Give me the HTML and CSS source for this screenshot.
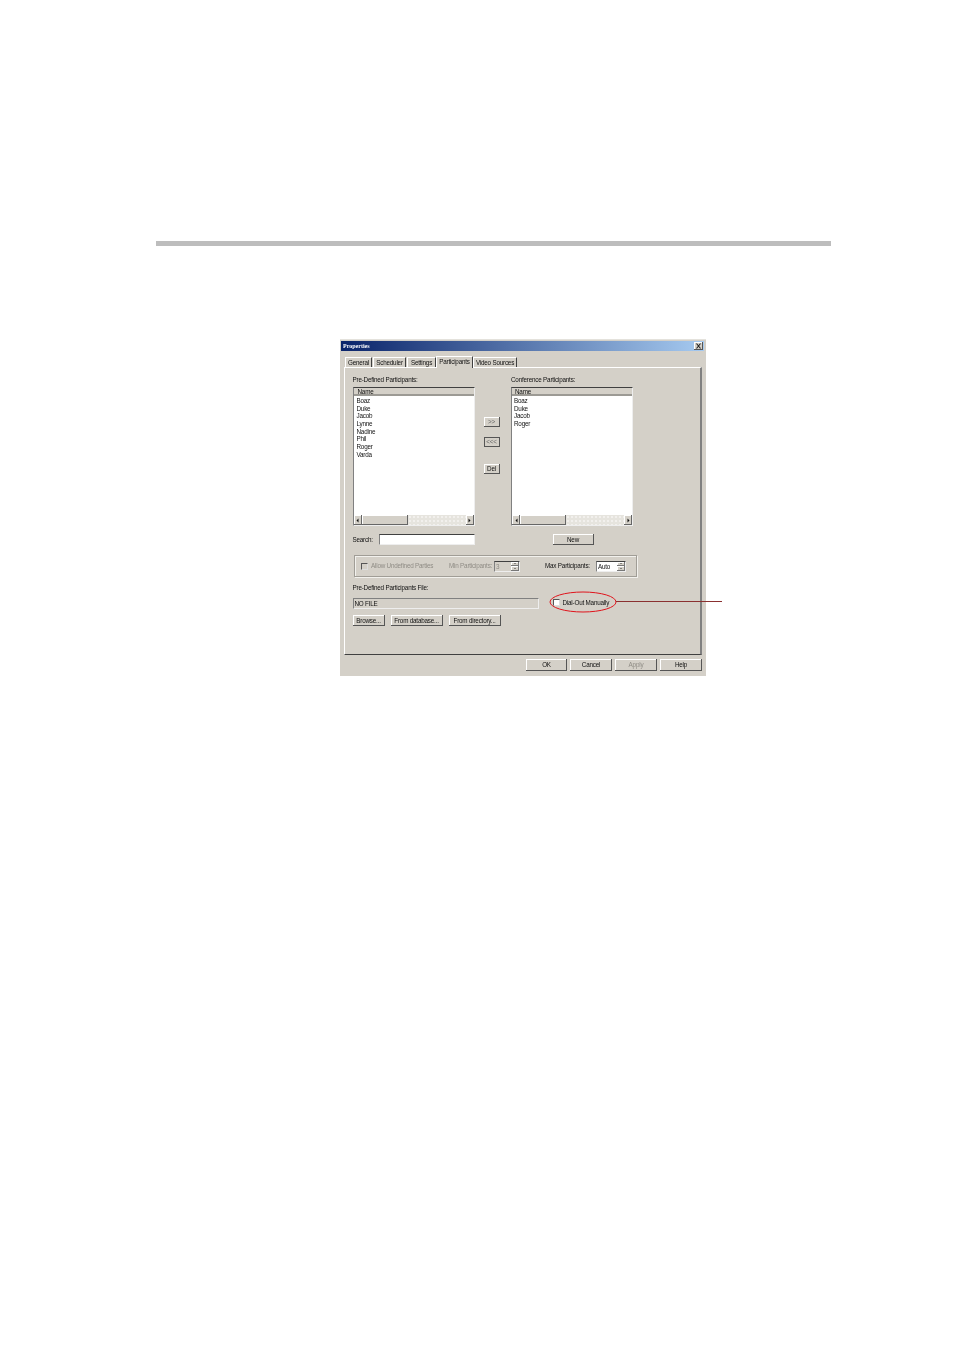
FILE: index.html
```html
<!DOCTYPE html>
<html lang="en">
<head>
    <meta charset="UTF-8">
    <title>Properties</title>
    <link rel="stylesheet" href="styles.css">
</head>
<body>
    <div class="page">
        <div class="rule"></div>

        <div class="dialog">
            <div class="title-bar">
                <span>Properties</span>
                <span class="close-btn">
                    <svg width="9" height="8" viewBox="0 0 9 8"><path d="M2.5 1.5l4 5M6.5 1.5l-4 5" stroke="#222" stroke-width="1.1" fill="none"/></svg>
                </span>
            </div>

            <div class="tabs">
                <div class="tab tab-general">General</div>
                <div class="tab tab-scheduler">Scheduler</div>
                <div class="tab tab-settings">Settings</div>
                <div class="tab tab-participants active">Participants</div>
                <div class="tab tab-video">Video Sources</div>
            </div>

            <div class="panel">
                <div class="lists">
                    <div class="list-col">
                        <div class="field-label">Pre-Defined Participants:</div>
                        <div class="listbox">
                            <div class="list-head">Name</div>
                            <div class="list-rows">
                                <div>Boaz</div>
                                <div>Duke</div>
                                <div>Jacob</div>
                                <div>Lynne</div>
                                <div>Nadine</div>
                                <div>Phil</div>
                                <div>Roger</div>
                                <div>Varda</div>
                            </div>
                            <div class="scrollbar">
                                <span class="arrow"><svg width="3" height="5" viewBox="0 0 3 5"><path d="M2.5 .5v4L.5 2.5z" fill="#111"/></svg></span>
                                <span class="thumb"></span>
                                <span class="track"></span>
                                <span class="arrow"><svg width="3" height="5" viewBox="0 0 3 5"><path d="M.5 .5v4l2-2z" fill="#111"/></svg></span>
                            </div>
                        </div>
                    </div>

                    <div class="move-btns">
                        <div class="btn small muted">&gt;&gt;</div>
                        <div class="btn small muted focused">&lt;&lt;&lt;</div>
                        <div class="btn small del">Del</div>
                    </div>

                    <div class="list-col">
                        <div class="field-label">Conference Participants:</div>
                        <div class="listbox">
                            <div class="list-head">Name</div>
                            <div class="list-rows">
                                <div>Boaz</div>
                                <div>Duke</div>
                                <div>Jacob</div>
                                <div>Roger</div>
                            </div>
                            <div class="scrollbar">
                                <span class="arrow"><svg width="3" height="5" viewBox="0 0 3 5"><path d="M2.5 .5v4L.5 2.5z" fill="#111"/></svg></span>
                                <span class="thumb"></span>
                                <span class="track"></span>
                                <span class="arrow"><svg width="3" height="5" viewBox="0 0 3 5"><path d="M.5 .5v4l2-2z" fill="#111"/></svg></span>
                            </div>
                        </div>
                    </div>
                </div>

                <div class="search-row">
                    <span class="search-label">Search:</span>
                    <span class="input search-input"></span>
                    <div class="btn new-btn">New</div>
                </div>

                <div class="group">
                    <span class="checkbox disabled"></span>
                    <span class="disabled-text allow-label">Allow Undefined Parties</span>
                    <span class="disabled-text min-label">Min Participants:</span>
                    <span class="spin disabled-spin">
                        <span class="spin-value">3</span>
                        <span class="spin-btns"><i></i><i></i></span>
                    </span>
                    <span class="max-label">Max Participants:</span>
                    <span class="spin">
                        <span class="spin-value">Auto</span>
                        <span class="spin-btns"><i></i><i></i></span>
                    </span>
                </div>

                <div class="field-label file-label">Pre-Defined Participants File:</div>
                <div class="file-row">
                    <div class="file-field">NO FILE</div>
                    <span class="checkbox"></span>
                    <span class="dial-label">Dial-Out Manually</span>
                </div>

                <div class="file-btns">
                    <div class="btn browse-btn">Browse...</div>
                    <div class="btn db-btn">From database...</div>
                    <div class="btn dir-btn">From directory...</div>
                </div>
            </div>

            <div class="footer">
                <div class="btn foot-btn">OK</div>
                <div class="btn foot-btn">Cancel</div>
                <div class="btn foot-btn apply">Apply</div>
                <div class="btn foot-btn">Help</div>
            </div>
        </div>

        <svg class="callout" width="180" height="24" viewBox="0 0 180 24">
            <ellipse cx="35" cy="12" rx="33" ry="10" fill="none" stroke="#e0141c" stroke-width="1"/>
            <path d="M68 11.5H174" stroke="#8a3030" stroke-width="1" fill="none"/>
        </svg>
    </div>
</body>
</html>
```

FILE: styles.css
```css
:root {
    --face: #d4d0c8;
    --dark: #808080;
    --darker: #404040;
    --text: #111;
    --disabled: #8f8c85;
}

* {
    box-sizing: border-box;
    margin: 0;
    padding: 0;
}

html, body {
    height: 100%;
    background: #fff;
    overflow: hidden;
}

body {
    font-family: "Liberation Sans", Arial, sans-serif;
    font-size: 6.3px;
    line-height: 8px;
    letter-spacing: -0.2px;
    color: var(--text);
}

.page {
    position: relative;
    width: 954px;
    height: 1351px;
    padding-top: 241px;
}

.rule {
    width: 675px;
    height: 5px;
    margin-left: 156px;
    background: #bdbdbd;
}

.dialog {
    width: 366px;
    height: 337px;
    margin: 93px 0 0 340px;
    padding: 1px 2px 0 1px;
    background: var(--face);
    border-top: 1px solid #e4e2dc;
    filter: blur(0.3px);
}

.title-bar {
    height: 10px;
    padding: 0 1px 0 2px;
    display: flex;
    justify-content: space-between;
    align-items: center;
    background: linear-gradient(90deg, #0a246a, #a6caf0);
    color: #fff;
    font-weight: 700;
    font-family: "Liberation Serif", serif;
    letter-spacing: 0;
    font-size: 6px;
}

.close-btn {
    width: 9px;
    height: 8px;
    display: flex;
    background: var(--face);
    box-shadow: inset -1px -1px 0 #555, inset 1px 1px 0 #fff;
}

.tabs {
    height: 16px;
    position: relative;
    display: flex;
    align-items: flex-end;
    padding-left: 4px;
}

.tab {
    height: 10px;
    line-height: 9px;
    text-align: center;
    border-top: 1px solid #fff;
    border-left: 1px solid #fff;
    border-right: 1px solid var(--darker);
}

.tab-general { width: 27px; margin-right: 1px; }
.tab-scheduler { width: 33px; margin-right: 1px; }
.tab-settings { width: 29px; }

.tab.active {
    width: 37px;
    height: 12px;
    margin-bottom: -1px;
    background: var(--face);
    position: relative;
    z-index: 1;
}

.tab-video { width: 44px; }

.panel {
    width: 358px;
    height: 288px;
    margin-left: 3px;
    padding: 8px 0 0 7.5px;
    border-top: 1px solid #fff;
    border-left: 1px solid #fff;
    border-right: 2px solid var(--dark);
    border-bottom: 1px solid var(--darker);
}

.lists {
    display: grid;
    grid-template-columns: 122px 36.5px 122px;
}

.field-label {
    height: 8px;
    margin-bottom: 3px;
}

.listbox {
    height: 139px;
    display: flex;
    flex-direction: column;
    background: #fff;
    border-top: 1px solid var(--darker);
    border-left: 1px solid var(--dark);
    border-right: 1px solid #eee;
    border-bottom: 1px solid #eee;
}

.list-head {
    height: 8px;
    padding-left: 4px;
    line-height: 8px;
    background: var(--face);
    border-bottom: 2px solid #9c9a94;
}

.list-rows {
    flex: 1;
    padding: 1px 0 0 3px;
    line-height: 7.65px;
}

.list-col:last-child .list-head { padding-left: 3px; }
.list-col:last-child .list-rows { padding-left: 2px; }

.scrollbar {
    height: 10px;
    display: flex;
}

.arrow {
    width: 8px;
    display: flex;
    align-items: center;
    justify-content: center;
    background: var(--face);
    box-shadow: inset -1px -1px 0 #666, inset 1px 1px 0 #fff;
}

.thumb {
    width: 46px;
    background: var(--face);
    box-shadow: inset -1px -1px 0 #666, inset 1px 1px 0 #fff;
}

.track {
    flex: 1;
    background-color: #e6e4de;
    background-image: radial-gradient(circle, #fff 0.6px, transparent 0.8px);
    background-size: 4px 4px;
}

.move-btns {
    display: flex;
    flex-direction: column;
    padding: 41px 0 0 9px;
}

.btn {
    height: 11px;
    line-height: 11px;
    text-align: center;
    background: var(--face);
    box-shadow: inset -1px -1px 0 #555, inset 1px 1px 0 #fff;
}

.btn.small {
    width: 16px;
    height: 10px;
    line-height: 9px;
}

.btn.muted { color: #666; }
.btn.focused { margin-top: 10px; outline: 1px solid #555; outline-offset: -1px; }
.btn.del { margin-top: 17px; }

.search-row {
    height: 11px;
    margin-top: 8px;
    display: flex;
    align-items: center;
}

.search-label { width: 26px; }

.input {
    background: #fff;
    border-top: 1px solid var(--darker);
    border-left: 1px solid var(--dark);
    border-right: 1px solid #eee;
    border-bottom: 1px solid #eee;
}

.search-input {
    width: 96px;
    height: 11px;
}

.new-btn {
    width: 41px;
    margin-left: 78px;
}

.group {
    width: 283px;
    height: 22px;
    margin: 10px 0 0 1.5px;
    padding-left: 6px;
    display: flex;
    align-items: center;
    border: 1px solid #a09d96;
    border-bottom-color: #a09d96;
    box-shadow: inset 1px 1px 0 #f2f1ed, 1px 1px 0 #f2f1ed;
}

.checkbox {
    width: 7px;
    height: 7px;
    flex: none;
    background: #fff;
    border-top: 1px solid #555;
    border-left: 1px solid #555;
    border-right: 1px solid #ddd;
    border-bottom: 1px solid #ddd;
}

.checkbox.disabled { background: var(--face); }

.disabled-text { color: var(--disabled); }
.allow-label { width: 78px; margin-left: 3px; }
.min-label { width: 45px; }
.max-label { margin: 0 6px 0 25px; }

.spin {
    width: 30px;
    height: 11px;
    display: flex;
    justify-content: space-between;
    background: #fff;
    border-top: 1px solid var(--darker);
    border-left: 1px solid var(--dark);
    border-right: 1px solid #eee;
    border-bottom: 1px solid #eee;
}

.disabled-spin {
    width: 26px;
    background: var(--face);
    color: var(--disabled);
}

.spin-value {
    padding-left: 1px;
    line-height: 9px;
}

.spin-btns {
    width: 8px;
    display: flex;
    flex-direction: column;
}

.spin-btns i {
    flex: 1;
    display: flex;
    align-items: center;
    justify-content: center;
    background: var(--face);
    box-shadow: inset -1px -1px 0 #777, inset 1px 1px 0 #fff;
}

.spin-btns i::after {
    content: "";
    border-left: 1.5px solid transparent;
    border-right: 1.5px solid transparent;
    border-bottom: 1.5px solid #333;
}

.spin-btns i + i::after {
    border-bottom: 0;
    border-top: 1.5px solid #333;
}

.file-label {
    margin-top: 7px;
    margin-bottom: 6px;
}

.file-row {
    height: 11px;
    display: flex;
    align-items: center;
}

.file-row .checkbox {
    margin: 0 0 2px 14px;
}

.file-field {
    width: 186px;
    height: 11px;
    padding-left: 1px;
    line-height: 9px;
    border-top: 1px solid var(--dark);
    border-left: 1px solid var(--dark);
    border-right: 1px solid #eee;
    border-bottom: 1px solid #eee;
}

.dial-label { margin: 0 0 2px 3px; }

.file-btns {
    margin-top: 6px;
    display: flex;
    gap: 6px;
}

.browse-btn { width: 32px; }
.db-btn { width: 52px; }
.dir-btn { width: 52px; }

.footer {
    margin-top: 4px;
    padding-right: 2px;
    display: flex;
    justify-content: flex-end;
    gap: 3px;
}

.foot-btn {
    width: 42px;
    height: 12px;
    line-height: 12px;
}

.foot-btn:first-child { width: 41px; }

.apply { color: var(--disabled); }

.callout {
    position: absolute;
    left: 548px;
    top: 590px;
}
```
